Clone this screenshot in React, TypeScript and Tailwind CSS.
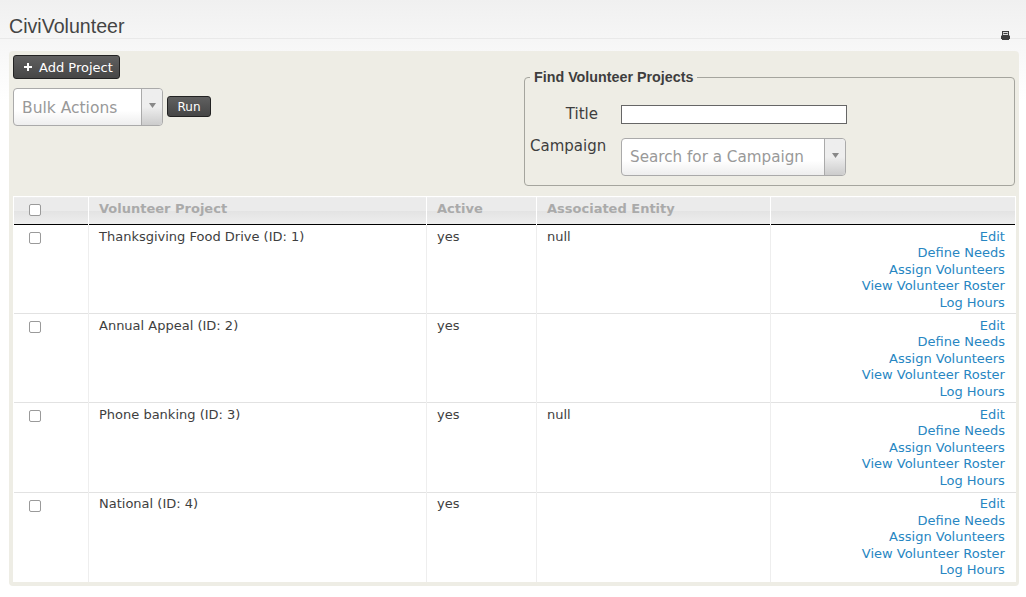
import React from "react";

const projects = [
  { id: 1, name: "Thanksgiving Food Drive", entity: "null", pad: "pt-[3.600px]" },
  { id: 2, name: "Annual Appeal", entity: "", pad: "pt-[3.600px]" },
  { id: 3, name: "Phone banking", entity: "null", pad: "pt-[3.800px]" },
  { id: 4, name: "National", entity: "", pad: "pt-[3px]" },
];

const links = ["Edit", "Define Needs", "Assign Volunteers", "View Volunteer Roster", "Log Hours"];

const Caret = () => (
  <svg width="7" height="5" viewBox="0 0 7 5">
    <path d="M0 0h7L3.5 5z" fill="#888" />
  </svg>
);

const Checkbox = () => (
  <div className="h-[12px] w-[12px] rounded-[2px] border border-[#9a9a9a] bg-white" />
);

const PrintIcon = () => (
  <svg width="9" height="9" viewBox="0 0 9 9">
    <rect x="1.500" y="0.500" width="6" height="4" fill="#ddd" stroke="#3e3e3e" />
    <path d="M2.500 2h4v1h-4z" fill="#3e3e3e" />
    <path d="M0.500 4.500h8a.5.500 0 0 1 .5.500v3H0V5a.5.500 0 0 1 .5-.5z" fill="#3e3e3e" />
    <path d="M1 8h7v1H1z" fill="#3e3e3e" />
  </svg>
);

const Select2 = ({ label, className, textClass }: { label: string; className: string; textClass: string }) => (
  <div className={`flex rounded-[4px] border border-[#aaa] bg-gradient-to-b from-white from-60% to-[#eee] ${className}`}>
    <div className={`flex flex-1 items-center pl-2 ${textClass} text-[#999]`}>{label}</div>
    <div className="flex w-[21px] justify-center rounded-r-[4px] border-l border-[#aaa] bg-gradient-to-b from-[#eee] from-50% to-[#ccc] pt-[14px]">
      <Caret />
    </div>
  </div>
);

const App = () => {
  return (
    <div className="min-h-[597px] bg-gradient-to-b from-[#f0f0f0] to-white to-[100px] font-['DejaVu_Sans',sans-serif] text-[13px] text-[#3e3e3e]">
      <div className="flex h-[39px] items-end justify-between border-b border-[#e9e9e9] pl-[9px] pr-[16px]">
        <h1 className="mb-[-2px] font-['Liberation_Sans',sans-serif] text-[19.600px] leading-[28px] text-[#444]">CiviVolunteer</h1>
        <div className="mb-[-2px]">
          <PrintIcon />
        </div>
      </div>

      <div className="ml-[9px] mr-[7px] mt-[12px] rounded-[4px] bg-[#eeede5] pb-[4px] pl-[4px] pr-[3px] pt-[4px]">
        <div className="flex h-[141px] justify-between">
          <div>
            <button type="button" className="flex h-[24px] w-[107px] items-center rounded-[3px] border border-[#222] bg-gradient-to-b from-[#606060] to-[#464646] pl-[10px] pt-[1px] text-[13px] text-white">
              <svg width="8" height="8" viewBox="0 0 8 8" fill="#fff" className="mb-[2px]">
                <path d="M3 0h2v3h3v2H5v3H3V5H0V3h3z" />
              </svg>
              <span className="ml-[7px]">Add Project</span>
            </button>
            <div className="mt-[9px] flex items-center gap-[4px]">
              <Select2 label="Bulk Actions" className="h-[38px] w-[150px]" textClass="pt-[4px] text-[15.500px]" />
              <button type="button" className="mb-[1px] h-[21px] w-[44px] rounded-[3px] border border-[#222] bg-gradient-to-b from-[#606060] to-[#464646] text-[12px] leading-none text-white">
                Run
              </button>
            </div>
          </div>

          <fieldset className="mr-[1px] mt-[14px] h-[117px] w-[491px] rounded-[4px] border border-[#a5a59e] px-[5px]">
            <legend className="px-[4px] font-['Liberation_Sans',sans-serif] text-[14.300px] font-bold leading-[16px] text-[#3e3e3e]">
              Find Volunteer Projects
            </legend>
            <div className="mt-[18px] flex items-center">
              <div className="w-[91px] pr-[23px] text-right text-[15px]">Title</div>
              <input className="h-[19px] w-[226px] border border-[#666] bg-white" />
            </div>
            <div className="mt-[12px] flex">
              <div className="w-[91px] text-[15px] leading-[16px]">
                <span className="block whitespace-nowrap">Campaign</span>
              </div>
              <Select2 label="Search for a Campaign" className="h-[38px] w-[225px]" textClass="pt-[2px] text-[15.200px]" />
            </div>
          </fieldset>
        </div>

        <table className="w-[1002px] table-fixed border-collapse bg-white text-[13px]">
          <colgroup>
            <col className="w-[75px]" />
            <col className="w-[338px]" />
            <col className="w-[110px]" />
            <col className="w-[234px]" />
            <col className="w-[245px]" />
          </colgroup>
          <thead>
            <tr className="h-[28px] border-b border-t border-b-black border-t-white bg-[linear-gradient(to_bottom,#ebebeb_0%,#ebebeb_50%,#e3e3e3_50%,#eeeeee_100%)] text-left font-bold text-[#aaa]">
              <th className="border-x border-white pb-[2px] pl-[15px] align-middle">
                <Checkbox />
              </th>
              <th className="border-x border-white pb-[3px] pl-[10px]">Volunteer Project</th>
              <th className="border-x border-white pb-[3px] pl-[10px]">Active</th>
              <th className="border-x border-white pb-[3px] pl-[10px]">Associated Entity</th>
              <th className="border-x border-white" />
            </tr>
          </thead>
          <tbody>
            {projects.map((p) => (
              <tr key={p.id} className="h-[89px] border-b border-[#e2e2e2] align-top last:border-b-0 [&:nth-child(3)]:h-[90px]">
                <td className="border-r border-[#eeeeee] pl-[15px] pt-[7px]">
                  <Checkbox />
                </td>
                <td className={`border-r border-[#eeeeee] pl-[10px] leading-[16.500px] ${p.pad}`}>
                  {p.name} (ID: {p.id})
                </td>
                <td className={`border-r border-[#eeeeee] pl-[10px] leading-[16.500px] ${p.pad}`}>yes</td>
                <td className={`border-r border-[#eeeeee] pl-[10px] leading-[16.500px] ${p.pad}`}>{p.entity}</td>
                <td className={`pr-[10.600px] text-right leading-[16.500px] text-[#2786c2] ${p.pad}`}>
                  {links.map((l) => (
                    <div key={l}>{l}</div>
                  ))}
                </td>
              </tr>
            ))}
          </tbody>
        </table>
      </div>
    </div>
  );
};

export default App;
